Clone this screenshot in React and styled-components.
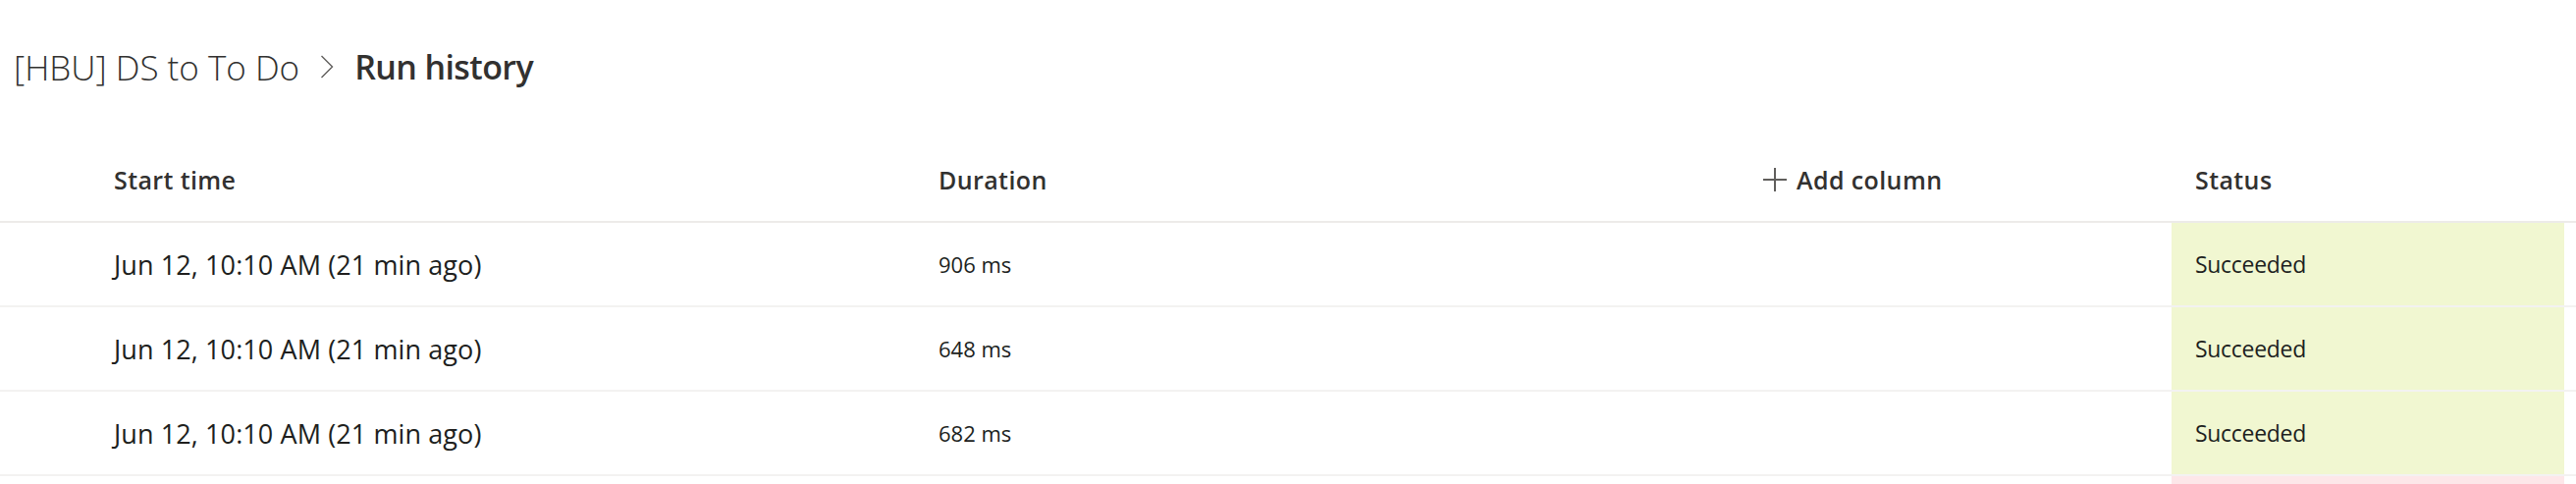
import React from "react";
import styled, { createGlobalStyle } from "styled-components";

const GlobalStyle = createGlobalStyle`
  html, body {
    margin: 0;
    padding: 0;
    background: #ffffff;
  }
  body {
    font-family: "Segoe UI", "Open Sans", "Noto Sans", sans-serif;
    color: #323130;
  }
`;

// last run only peeks in at the bottom edge, so it carries no text
const runs = [
  { start: "Jun 12, 10:10 AM (21 min ago)", duration: "906 ms", status: "Succeeded" },
  { start: "Jun 12, 10:10 AM (21 min ago)", duration: "648 ms", status: "Succeeded" },
  { start: "Jun 12, 10:10 AM (21 min ago)", duration: "682 ms", status: "Succeeded" },
  { start: "", duration: "", status: "Failed", hidden: true },
];

const Page = styled.div`
  width: 100%;
  overflow: hidden;
`;

const Breadcrumb = styled.div`
  display: flex;
  align-items: center;
  height: 140px;
  padding: 0 0 4px 14px;
  box-sizing: border-box;
  font-size: 35px;
  color: #323130;
`;

const Crumb = styled.span`
  font-size: ${(props) => (props.current ? 34 : 35)}px;
  font-weight: ${(props) => (props.current ? 600 : 300)};
  letter-spacing: ${(props) => (props.current ? "-0.6px" : "0")};
`;

const Chevron = styled.svg`
  width: 14px;
  height: 24px;
  margin: 0 21px 0 21px;
`;

const Grid = styled.div`
  display: grid;
  grid-template-columns: 92px 840px 840px 440px 400px 1fr;
`;

const HeaderRow = styled.div`
  display: contents;
`;

const HeaderCell = styled.div`
  display: flex;
  align-items: center;
  gap: 10px;
  height: 85px;
  padding-left: 24px;
  border-bottom: 2px solid #edebe9;
  font-size: 25px;
  font-weight: 600;
  letter-spacing: 0.4px;
  color: #323130;
`;

const Spacer = styled.div`
  height: ${(props) => props.h}px;
  border-bottom: 2px solid ${(props) => props.line};
`;

const Cell = styled.div`
  display: flex;
  align-items: center;
  height: 84px;
  padding-left: 24px;
  border-bottom: 2px solid #f3f2f1;
  font-size: ${(props) => props.size || 22}px;
  letter-spacing: ${(props) => props.track || 0}px;
  color: #201f1e;
  white-space: nowrap;
`;

const StatusCell = styled(Cell)`
  background: ${(props) => (props.status === "Succeeded" ? "#f1f7d1" : "#fde7e9")};
`;

const PlusIcon = () => (
  <svg width="24" height="24" viewBox="0 0 24 24">
    <path d="M12 0v24M0 12h24" stroke="#605e5c" strokeWidth="2" fill="none" />
  </svg>
);

export default function App() {
  return (
    <Page>
      <GlobalStyle />
      <Breadcrumb>
        <Crumb>[HBU] DS to To Do</Crumb>
        <Chevron viewBox="0 0 14 24">
          <path d="M1.5 1l11 11-11 11" stroke="#605e5c" strokeWidth="1.4" fill="none" />
        </Chevron>
        <Crumb current>Run history</Crumb>
      </Breadcrumb>
      <Grid>
        <HeaderRow>
          <Spacer h={85} line="#edebe9" />
          <HeaderCell>Start time</HeaderCell>
          <HeaderCell>Duration</HeaderCell>
          <HeaderCell>
            <PlusIcon />
            Add column
          </HeaderCell>
          <HeaderCell>Status</HeaderCell>
          <Spacer h={85} line="#edebe9" />
        </HeaderRow>
        {runs.map((run, i) => (
          <React.Fragment key={i}>
            <Spacer h={84} line="#f3f2f1" />
            <Cell size={27} track={0.1}>{run.start}</Cell>
            <Cell size={22}>{run.duration}</Cell>
            <Cell />
            <StatusCell status={run.status} size={23} track={-0.3}>
              {run.hidden ? null : run.status}
            </StatusCell>
            <Spacer h={84} line="#f3f2f1" />
          </React.Fragment>
        ))}
      </Grid>
    </Page>
  );
}
